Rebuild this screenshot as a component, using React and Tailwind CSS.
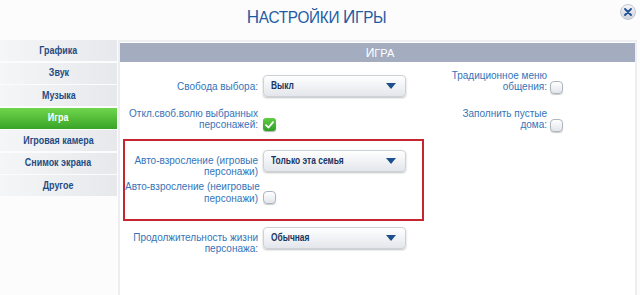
import React from 'react';

const TABS = ['Графика', 'Звук', 'Музыка', 'Игра', 'Игровая камера', 'Снимок экрана', 'Другое'];

const Arrow = () => (
  <svg width="10" height="6" viewBox="0 0 10 6" className="shrink-0">
    <path d="M0 0 H10 L5 6 Z" fill="#1d4f8c" />
  </svg>
);

const Select = ({ value }) => (
  <div className="w-[143px] h-[22px] flex items-center justify-between pl-[7px] pr-[9px] rounded-[4px] border border-[#cdd2d9] bg-linear-to-b from-white to-[#e3e6eb] shadow-[0_1px_2px_rgba(0,0,0,0.25)]">
    <span className="inline-block origin-left scale-x-[0.8] whitespace-nowrap text-[10.5px] font-bold text-[#1a3560]">{value}</span>
    <Arrow />
  </div>
);

const Box = ({ checked }) =>
  checked ? (
    <div className="w-[13px] h-[13px] rounded-[3px] bg-linear-to-b from-[#5fce45] to-[#2f9e25] flex items-center justify-center shadow-[0_1px_1px_rgba(0,0,0,0.3)]">
      <svg width="9" height="8" viewBox="0 0 9 8">
        <path d="M1 4.2 L3.5 6.5 L8 1.2" fill="none" stroke="white" strokeWidth="1.8" strokeLinecap="round" strokeLinejoin="round" />
      </svg>
    </div>
  ) : (
    <div className="w-[13px] h-[13px] rounded-[4px] border border-[#aeb5bf] bg-linear-to-b from-white to-[#e2e5ea] shadow-[0_1px_1px_rgba(0,0,0,0.2)]" />
  );

const Label = ({ children, className = '' }) => (
  <div className={`text-right whitespace-nowrap text-[10px] leading-[11px] text-[#3473b9] ${className}`}>{children}</div>
);

export default function App() {
  return (
    <div className="w-[640px] h-[295px] bg-[#fcfcfd] overflow-hidden relative" style={{ fontFamily: '"Liberation Sans", Arial, sans-serif' }}>
      {/* Title */}
      <div className="h-[40px] flex items-center justify-center pb-[6px] pr-[6px]">
        <h1 className="inline-block scale-x-[0.9] text-[#1f5ca3] text-[17px] tracking-[-0.3px]">
          <span className="text-[19px]">Н</span>АСТРОЙКИ <span className="text-[19px]">И</span>ГРЫ
        </h1>
      </div>
      <button className="absolute left-[620px] top-[4px] w-[16px] h-[16px] rounded-full bg-linear-to-b from-[#f4f5f7] to-[#cfd3da] border border-[#c3c8d0] flex items-center justify-center">
        <svg width="8" height="8" viewBox="0 0 8 8">
          <path d="M1 1 L7 7 M7 1 L1 7" stroke="#1c4f96" strokeWidth="1.8" strokeLinecap="round" />
        </svg>
      </button>

      <div className="flex">
        {/* Sidebar */}
        <nav className="w-[117px] flex flex-col gap-[1.5px] shrink-0">
          {TABS.map(t => {
            const active = t === 'Игра';
            return (
              <div
                key={t}
                className={`h-[21px] flex items-center justify-center ${
                  active
                    ? 'bg-linear-to-b from-[#6fd64c] to-[#37a427] text-white'
                    : 'bg-linear-to-r from-[#f5f6f7] to-[#e6e8eb] text-[#1f4b83]'
                }`}
              >
                <span className="inline-block scale-x-[0.85] whitespace-nowrap text-[10.5px] font-bold">{t}</span>
              </div>
            );
          })}
        </nav>

        {/* Panel */}
        <section className="ml-[1px] w-[519px] h-[255px] border-[2px] border-b-0 border-[#eceef2] bg-white pt-[1px]">
          <div className="h-[19px] bg-[#a3adbf] flex items-center justify-center pl-[5px]">
            <span className="text-white text-[11px]">
              <span className="text-[12px]">И</span>ГРА
            </span>
          </div>

          <div className="flex">
            {/* left column */}
            <div className="w-[301px] ml-[3px] flex flex-col">
              <div className="flex items-center mt-[13px]">
                <Label className="w-[135px]">Свобода выбора:</Label>
                <div className="ml-[5px]"><Select value="Выкл" /></div>
              </div>

              <div className="flex items-end mt-[11px]">
                <Label className="w-[135px]">Откл.своб.волю выбранных<br />персонажей:</Label>
                <div className="ml-[5px] mb-[-1px]"><Box checked /></div>
              </div>

              <div className="mt-[9px] border-[2px] border-[#c6242e] pt-[9px] pb-[14px]">
                <div className="flex items-start">
                  <Label className="w-[133px] mt-[5px]">Авто-взросление (игровые<br />персонажи)</Label>
                  <div className="ml-[5px]"><Select value="Только эта семья" /></div>
                </div>
                <div className="flex items-end mt-[4px]">
                  <Label className="w-[133px] leading-[12px]">Авто-взросление (неигровые<br />персонажи)</Label>
                  <div className="ml-[5px] mb-[1px]"><Box /></div>
                </div>
              </div>

              <div className="flex items-start mt-[6px]">
                <Label className="w-[135px] mt-[5px]">Продолжительность жизни<br />персонажа:</Label>
                <div className="ml-[5px]"><Select value="Обычная" /></div>
              </div>
            </div>

            {/* right column */}
            <div className="flex flex-col">
              <div className="flex items-end mt-[8px]">
                <Label className="w-[123px]">Традиционное меню<br />общения:</Label>
                <div className="ml-[3px] mb-[-2px]"><Box /></div>
              </div>
              <div className="flex items-end mt-[16px]">
                <Label className="w-[123px]">Заполнить пустые<br />дома:</Label>
                <div className="ml-[3px] mb-[-2px]"><Box /></div>
              </div>
            </div>
          </div>
        </section>
      </div>
    </div>
  );
}
